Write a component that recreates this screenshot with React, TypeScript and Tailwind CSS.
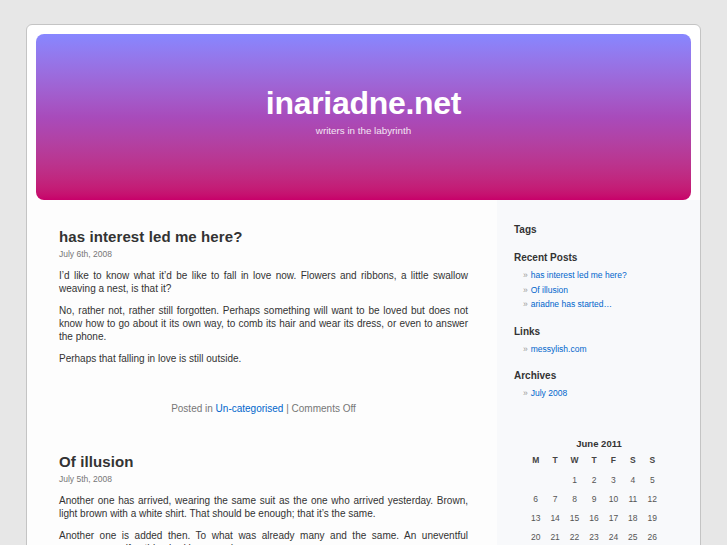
import React from 'react';

const posts = [
  {
    title: 'has interest led me here?',
    date: 'July 6th, 2008',
    paragraphs: [
      'I’d like to know what it’d be like to fall in love now. Flowers and ribbons, a little swallow weaving a nest, is that it?',
      'No, rather not, rather still forgotten. Perhaps something will want to be loved but does not know how to go about it its own way, to comb its hair and wear its dress, or even to answer the phone.',
      'Perhaps that falling in love is still outside.',
    ],
  },
  {
    title: 'Of illusion',
    date: 'July 5th, 2008',
    paragraphs: [
      'Another one has arrived, wearing the same suit as the one who arrived yesterday. Brown, light brown with a white shirt. That should be enough; that it’s the same.',
      'Another one is added then. To what was already many and the same. An uneventful recurrence, as if nothing had happened.',
    ],
  },
];

const recent = ['has interest led me here?', 'Of illusion', 'ariadne has started…'];

// June 2011 starts on a Wednesday
const calendarCells: (number | null)[] = [null, null, ...Array.from({ length: 30 }, (_, i) => i + 1)];

const SideHeading = ({ children }: { children: React.ReactNode }) => (
  <h2 className="text-[10px] font-bold leading-[14px] text-[#333]">{children}</h2>
);

const SideList = ({ items }: { items: string[] }) => (
  <ul className="mt-[3px] pl-[9px]">
    {items.map((item) => (
      <li key={item} className="flex text-[8.5px] leading-[14.5px]">
        <span className="mr-[3px] text-[#999]">»</span>
        <a href="#" className="text-[#0066cc]">
          {item}
        </a>
      </li>
    ))}
  </ul>
);

export default function App() {
  return (
    <div className="min-h-screen bg-[#e7e7e7] pt-[24px] pl-[26px] font-['Liberation_Sans',Arial,sans-serif] text-[#333]">
      <div className="w-[675px] rounded-t-[6px] border border-[#c4c4c4] bg-white">
        {/* Header */}
        <div className="mx-[9px] mt-[9px] flex h-[166px] flex-col items-center rounded-[8px] bg-gradient-to-b from-[#8787ff] via-[#a84bbb] to-[#c8006a] pt-[50px]">
          <h1 className="text-[32px] font-bold leading-[38px] tracking-[-0.3px] text-white">inariadne.net</h1>
          <div className="mt-[3px] text-[9.8px] leading-[12px] text-[#f2e6f3]">writers in the labyrinth</div>
        </div>

        <div className="flex">
          {/* Main column */}
          <main className="w-[470px] bg-[#fdfdfd] pl-[32px] pr-[29px] pt-[28px]">
            {posts.map((post, i) => (
              <article key={post.title} className={i > 0 ? 'mt-[38px]' : ''}>
                <h2 className="text-[15px] font-bold leading-[18px] tracking-[0.1px] text-[#333]">{post.title}</h2>
                <div className="mt-[3px] text-[8.5px] leading-[10px] text-[#777]">{post.date}</div>
                <div className="mt-[11px] text-[10px] leading-[12.8px] text-[#333]">
                  {post.paragraphs.map((p, j) => (
                    <p key={j} className={`text-justify ${j > 0 ? 'mt-[9.5px]' : ''}`}>
                      {p}
                    </p>
                  ))}
                </div>
                <div className="mt-[36px] text-center text-[10px] leading-[13px] text-[#777]">
                  Posted in{' '}
                  <a href="#" className="text-[#0066cc]">
                    Un-categorised
                  </a>{' '}
                  | Comments Off
                </div>
              </article>
            ))}
          </main>

          {/* Sidebar */}
          <aside className="w-[203px] bg-[#f8f9fb] pl-[17px] pt-[23px] pb-[20px]">
            <SideHeading>Tags</SideHeading>
            <div className="mt-[14px]">
              <SideHeading>Recent Posts</SideHeading>
              <SideList items={recent} />
            </div>
            <div className="mt-[13px]">
              <SideHeading>Links</SideHeading>
              <SideList items={['messylish.com']} />
            </div>
            <div className="mt-[13px]">
              <SideHeading>Archives</SideHeading>
              <SideList items={['July 2008']} />
            </div>

            <div className="mt-[36px] w-[148px] pl-[12px]">
              <div className="pl-[10px] text-center text-[9.5px] font-bold leading-[14px] text-[#333]">June 2011</div>
              <div className="grid grid-cols-7 text-center text-[8.5px] leading-[19px]">
                {['M', 'T', 'W', 'T', 'F', 'S', 'S'].map((d, k) => (
                  <div key={k} className="font-bold text-[#444]">
                    {d}
                  </div>
                ))}
              </div>
              <div className="mt-[1px] grid grid-cols-7 text-center text-[8.5px] leading-[19px] text-[#555]">
                {calendarCells.map((c, k) => (
                  <div key={k}>{c ?? ''}</div>
                ))}
              </div>
            </div>
          </aside>
        </div>
      </div>
    </div>
  );
}
